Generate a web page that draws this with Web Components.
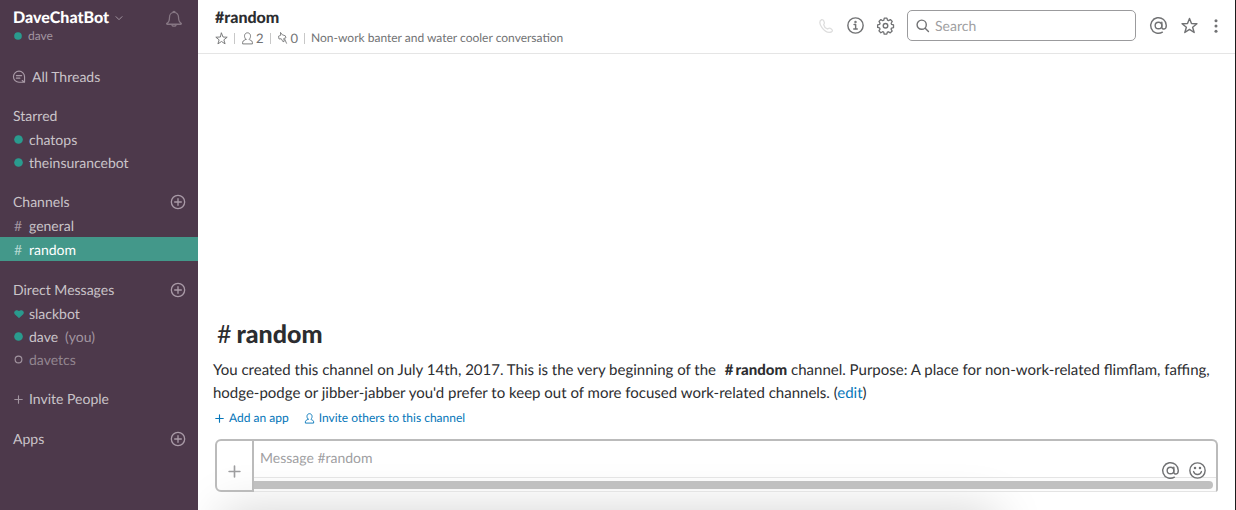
<!DOCTYPE html>
<html lang="en">
<head>
<meta charset="utf-8">
<title>#random | DaveChatBot</title>
<style>
  html, body { margin: 0; height: 100%; }
  body { font: 15px/24px Lato, "Liberation Sans", sans-serif; color: #2c2d30; background: #fff; text-rendering: geometricPrecision; }
</style>
</head>
<body>
<chat-app></chat-app>
<script>
const ICONS = {
  bell: '<path d="M12 3.200c-3.800 0-6 2.900-6 6.300 0 5.100-1.400 7.200-3.500 8.300-.6.4-.4 1.200.3 1.200h18.400c.7 0 .9-.8.3-1.200-2.100-1.100-3.500-3.200-3.500-8.300 0-3.400-2.200-6.300-6-6.300zM10.500 3.200a1.500 1.500 0 0 1 3 0M9 19c.2 3.500 5.800 3.500 6 0"/>',
  chevron: '<path d="M3 8l9 9 9-9"/>',
  threads: '<path d="M21.500 21H12a9.500 9.500 0 1 1 9.500-9.500V21zM21.500 21l-4-3M7.500 9.500h9M7.500 14h6"/>',
  plusCircle: '<circle cx="12" cy="12" r="10"/><path d="M12 7v10M7 12h10"/>',
  plus: '<path d="M12 2v20M2 12h20"/>',
  heart: '<path fill="currentColor" d="M12 20L3 11.500C-.5 7 5.500 1 12 7c6.500-6 12.500 0 9 4.500z"/>',
  dot: '<circle cx="12" cy="12" r="11.500" fill="currentColor" stroke="none"/>',
  ring: '<circle cx="12" cy="12" r="9"/>',
  star: '<path d="M12 2l2.800 7.300 7.700.3-6.100 4.800 2.200 7.500L12 17.500l-6.600 4.400 2.200-7.500-6.100-4.800 7.700-.3z"/>',
  person: '<path d="M9 13.500C4.500 9.500 6 1.500 12 1.500s7.500 8 3 12c0 2 6 1.500 6 5.500v3H3v-3c0-4 6-3.500 6-5.500z"/>',
  pin: '<path d="M7.500 1.500l3 4 6 2 1.500 4-4.500 1.500 1 5.500-2.500 1-3.500-6-4.500.5L3 8.500l3.500-1.500zM15.500 14.500l3.500 8"/>',
  phone: '<path d="M5.500 2.500C1.500 4.500 2 9 6 14.500S15.500 22.500 20 21c2.500-1.500 2-3-.5-5-2.500-1.800-3.500-.5-5.500.5-2.500-1-5-4-5.500-6.500 1.500-1.500 2-2.500.5-5C8 3 7.500 2 5.500 2.500z"/>',
  info: '<circle cx="12" cy="12" r="10.800"/><path d="M10 10.500h2.200V17M9.500 17h5"/><circle cx="12" cy="7" r=".7"/>',
  gear: '<path d="M10 1.500h4l.8 3.100 1.600.7 2.800-1.600 2.900 2.900-1.700 2.700.7 1.700 2.900.8v4l-3 .8-.7 1.600 1.600 2.800-2.900 2.900-2.700-1.700-1.700.7-.8 2.900h-4l-.7-3-1.600-.7-2.800 1.600-2.800-2.900 1.600-2.700-.7-1.700-2.900-.7v-4l3-.7.7-1.600-1.600-2.800 2.800-2.900 2.800 1.700 1.600-.7z" transform="translate(1 .2) scale(.93)"/><circle cx="12" cy="12.300" r="3.200"/>',
  search: '<circle cx="10.500" cy="10.500" r="8.500"/><path d="M17 17l6 6"/>',
  at: '<circle cx="12" cy="12" r="4.700"/><path d="M16.700 7.500v7c0 3.500 6.300 4 6.300-2.500a11 11 0 1 0-5.500 9.500"/>',
  dots: '<g fill="currentColor" stroke="none"><circle cx="12" cy="3" r="2.600"/><circle cx="12" cy="12" r="2.600"/><circle cx="12" cy="21" r="2.600"/></g>',
  smile: '<circle cx="12" cy="12" r="10.800"/><path d="M6.500 13.500c1.500 5.500 9.500 5.500 11 0"/><g fill="currentColor"><circle cx="8.500" cy="8.500" r=".8"/><circle cx="15.500" cy="8.500" r=".8"/></g>'
};

function define(name, markup, setup) {
  const template = document.createElement('template');
  template.innerHTML = markup;
  customElements.define(name, class extends HTMLElement {
    connectedCallback() {
      if (this.shadowRoot) return;
      this.attachShadow({ mode: 'open' }).append(template.content.cloneNode(true));
      if (setup) setup(this, this.shadowRoot);
    }
  });
}

const BUTTON = `button { display: flex; align-items: center; padding: 0; border: 0; background: none; color: inherit; font: inherit; text-rendering: inherit; cursor: pointer; }
  input { text-rendering: inherit; }`;

define('ui-icon', `
  <style>
    :host { display: block; flex: none; width: var(--size, 16px); height: var(--size, 16px); }
    svg { display: block; width: 100%; height: 100%; overflow: visible; fill: none; stroke: currentColor;
          stroke-width: var(--stroke, 2); stroke-linecap: round; stroke-linejoin: round; }
  </style>
  <svg viewBox="0 0 24 24" aria-hidden="true"></svg>`,
  (el, root) => { root.querySelector('svg').innerHTML = ICONS[el.getAttribute('name')] || ''; });

define('side-section', `
  <style>
    :host { display: block; margin-bottom: 16px; }
    header { display: flex; align-items: center; justify-content: space-between; height: 24px; box-sizing: border-box; padding: 2px 12px 0 13px; }
    h2 { margin: 0; font: inherit; }
    ${BUTTON}
    button { color: #a99aa7; --stroke: 2; }
  </style>
  <header><h2></h2></header>
  <slot></slot>`,
  (el, root) => {
    const label = el.getAttribute('label');
    root.querySelector('h2').textContent = label;
    if (el.hasAttribute('addable')) {
      root.querySelector('header').insertAdjacentHTML('beforeend',
        `<button aria-label="Add to ${label}"><ui-icon name="plusCircle"></ui-icon></button>`);
    }
  });

define('side-row', `
  <style>
    :host { display: block; }
    a { display: flex; align-items: center; height: var(--row, 23px); box-sizing: border-box; padding: 2px 0 0 14px; color: inherit; text-decoration: none; }
    .mark { display: flex; width: 15px; color: #a295a0; --size: 9px; --stroke: 3; }
    :host([mark=dot]) .mark, :host([mark=heart]) .mark { color: #2a9b8e; }
    :host([mark=heart]) .mark { --size: 10px; }
    :host([away]) { color: #938690; }
    :host([current]) a { background: #43988a; color: #fff; }
    :host([current]) .mark { color: #b5d8d2; }
    ::slotted(small) { margin-left: 7px; font-size: inherit; color: #a295a0; }
  </style>
  <a href="#"><span class="mark"></span><slot></slot></a>`,
  (el, root) => {
    const mark = el.getAttribute('mark');
    root.querySelector('.mark').innerHTML = mark === 'hash' ? '#' : `<ui-icon name="${mark}"></ui-icon>`;
  });

define('team-sidebar', `
  <style>
    :host { display: block; flex: none; width: 198px; box-sizing: border-box; background: #4d394b; color: #cac4c9; font-size: 14px; overflow: hidden; }
    ${BUTTON}
    .team { display: flex; justify-content: space-between; align-items: flex-start; padding: 8px 15px 0 13px; height: 58px; box-sizing: border-box; }
    .name { gap: 6px; height: 20px; font-size: 16px; font-weight: 900; color: #fff; --size: 8px; --stroke: 3; }
    .name ui-icon { color: #a295a0; }
    .user { display: flex; align-items: center; gap: 6px; height: 16px; padding-left: 1px; font-size: 12px; color: #a295a0; }
    .user ui-icon { --size: 8px; color: #2a9b8e; }
    .bell { padding-top: 2px; color: #867683; --size: 18px; --stroke: 1.700; }
    .threads { display: flex; align-items: center; gap: 6px; height: 24px; margin: 7px 0 14px; padding-left: 12px; color: inherit; text-decoration: none; --size: 14px; }
    .threads ui-icon { color: #a99aa7; }
    .channels { --row: 24px; }
    .invite { --row: 24px; margin-bottom: 16px; }
  </style>
  <div class="team">
    <div>
      <button class="name">DaveChatBot <ui-icon name="chevron"></ui-icon></button>
      <div class="user"><ui-icon name="dot"></ui-icon>dave</div>
    </div>
    <button class="bell" aria-label="Notifications"><ui-icon name="bell"></ui-icon></button>
  </div>
  <nav>
    <a class="threads" href="#"><ui-icon name="threads"></ui-icon>All Threads</a>
    <side-section label="Starred">
      <side-row mark="dot">chatops</side-row>
      <side-row mark="dot">theinsurancebot</side-row>
    </side-section>
    <side-section class="channels" label="Channels" addable>
      <side-row mark="hash">general</side-row>
      <side-row mark="hash" current>random</side-row>
    </side-section>
    <side-section label="Direct Messages" addable>
      <side-row mark="heart">slackbot</side-row>
      <side-row mark="dot">dave<small>(you)</small></side-row>
      <side-row mark="ring" away>davetcs</side-row>
    </side-section>
    <side-row class="invite" mark="plus">Invite People</side-row>
    <side-section label="Apps" addable></side-section>
  </nav>`);

define('channel-header', `
  <style>
    :host { display: flex; flex: none; justify-content: space-between; align-items: flex-start; height: 54px; box-sizing: border-box;
            padding: 8px 14px 0 17px; border-bottom: 1px solid #e5e5e5; color: #717274; }
    ${BUTTON}
    h1 { margin: 0 0 1px; font-size: 16px; line-height: 20px; font-weight: 900; color: #2c2d30; }
    .meta { display: flex; align-items: center; height: 18px; font-size: 12px; line-height: 18px; --size: 13px; --stroke: 1.700; }
    .meta > * + * { margin-left: 6px; padding-left: 7px; background: linear-gradient(#c8c8c8, #c8c8c8) left / 1px 11px no-repeat; }
    .meta button { gap: 2px; font-size: 13px; }
    .tools { display: flex; align-items: center; padding-top: 2px; --size: 17px; }
    .call { color: #dedede; margin-right: 13px; --size: 16px; }
    .info, .gear { margin-right: 13px; }
    label { display: flex; align-items: center; gap: 6px; width: 229px; height: 31px; box-sizing: border-box; padding: 0 8px;
            border: 1px solid #9b9b9d; border-radius: 5px; margin-right: 14px; --size: 13px; --stroke: 2.600; }
    input { flex: 1; min-width: 0; padding: 0; border: 0; outline: 0; background: none; font: inherit; font-size: 14px; color: #2c2d30; }
    input::placeholder { color: #a0a0a2; opacity: 1; }
    .starred { margin: 0 10px 0 14px; }
    .more { --size: 14px; width: 10px; justify-content: center; margin-left: 3px; }
  </style>
  <div>
    <h1>#random</h1>
    <div class="meta">
      <button aria-label="Star channel"><ui-icon name="star"></ui-icon></button>
      <button aria-label="2 members"><ui-icon name="person"></ui-icon>2</button>
      <button aria-label="0 pins"><ui-icon name="pin" style="--size:12px"></ui-icon>0</button>
      <span>Non-work banter and water cooler conversation</span>
    </div>
  </div>
  <div class="tools">
    <button class="call" aria-label="Call"><ui-icon name="phone"></ui-icon></button>
    <button class="info" aria-label="Details"><ui-icon name="info"></ui-icon></button>
    <button class="gear" aria-label="Settings"><ui-icon name="gear"></ui-icon></button>
    <label><ui-icon name="search"></ui-icon><input type="text" placeholder="Search" aria-label="Search"></label>
    <button aria-label="Mentions"><ui-icon name="at"></ui-icon></button>
    <button class="starred" aria-label="Starred items"><ui-icon name="star"></ui-icon></button>
    <button class="more" aria-label="More"><ui-icon name="dots"></ui-icon></button>
  </div>`);

define('channel-intro', `
  <style>
    :host { display: flex; flex-direction: column; justify-content: flex-end; flex: 1; min-height: 0; padding: 0 16px 11px 15px; }
    h2 { display: flex; align-items: center; gap: 5px; margin: 0 0 9px 4px; font-size: 25px; line-height: 32px; font-weight: 900; }
    h2 span { font-weight: 400; }
    p { margin: 0 0 3px; line-height: 23px; }
    p strong { font-weight: 900; }
    p strong::before { content: "#"; margin: 0 2px 0 5px; font-weight: 700; }
    a { color: #0576b9; text-decoration: none; }
    .actions { display: flex; gap: 15px; padding-left: 2px; font-size: 12px; line-height: 20px; }
    .actions a { display: flex; align-items: center; gap: 4px; --size: 11px; }
    .actions .add { gap: 5px; --size: 9px; --stroke: 3; }
  </style>
  <h2><span>#</span>random</h2>
  <p>You created this channel on July 14th, 2017. This is the very beginning of the <strong>random</strong> channel. Purpose: A place for non-work-related flimflam, faffing, hodge-podge or jibber-jabber you'd prefer to keep out of more focused work-related channels. (<a href="#">edit</a>)</p>
  <div class="actions">
    <a class="add" href="#"><ui-icon name="plus"></ui-icon>Add an app</a>
    <a href="#"><ui-icon name="person"></ui-icon>Invite others to this channel</a>
  </div>`);

define('message-composer', `
  <style>
    :host { position: relative; z-index: 1; display: flex; flex: none; height: 53px; margin: 0 17px 18px; color: #717274; }
    ${BUTTON}
    .attach { width: 39px; box-sizing: border-box; justify-content: center; padding-top: 12px; border: 2px solid #bbb; border-radius: 6px 0 0 6px; color: #9d9d9f; --size: 13px; --stroke: 3; }
    .field { display: flex; flex: 1; flex-direction: column; box-sizing: border-box; border: solid #bbb; border-width: 2px 2px 0 0; border-radius: 0 6px 3px 0; }
    input { flex: 1; min-width: 0; padding: 0 70px 2px 6px; border: 0; outline: 0; background: none; font: inherit; font-size: 14px; color: #2c2d30; }
    input::placeholder { color: #a0a0a2; opacity: 1; }
    .track { height: 15px; box-sizing: border-box; padding: 3px 3px 2px 0; border: solid #e4e4e4; border-width: 1px 0; background: #fafafa80; }
    .thumb { height: 8px; border-radius: 0 4px 4px 0; background: #c0c0c0; }
    .extras { position: absolute; right: 12px; top: 23px; display: flex; gap: 10px; --size: 17px; }
  </style>
  <button class="attach" aria-label="Attach"><ui-icon name="plus"></ui-icon></button>
  <div class="field">
    <input type="text" placeholder="Message #random" aria-label="Message #random">
    <div class="track"><div class="thumb"></div></div>
  </div>
  <div class="extras">
    <button aria-label="Mention someone"><ui-icon name="at"></ui-icon></button>
    <button aria-label="Emoji"><ui-icon name="smile"></ui-icon></button>
  </div>`);

define('chat-app', `
  <style>
    :host { display: flex; height: 100vh; box-sizing: border-box; overflow: hidden; border-right: 1px solid #1c1c1c; }
    main { position: relative; display: flex; flex: 1; min-width: 0; flex-direction: column; overflow: hidden; }
    main::after { content: ""; position: absolute; left: 24px; right: 238px; top: 100%; height: 60px; box-shadow: 0 0 48px rgba(0,0,0,.17); }
  </style>
  <team-sidebar></team-sidebar>
  <main>
    <channel-header></channel-header>
    <channel-intro></channel-intro>
    <message-composer></message-composer>
  </main>`);
</script>
</body>
</html>
